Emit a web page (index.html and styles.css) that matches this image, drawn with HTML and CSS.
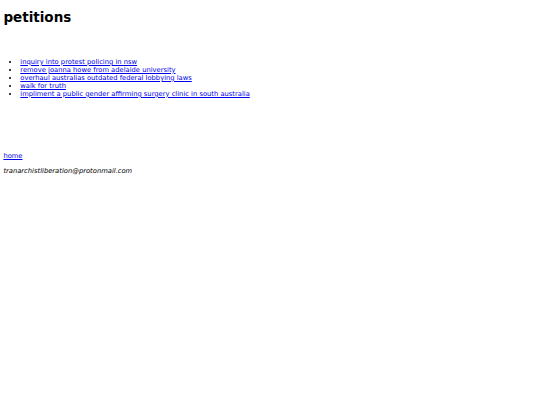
FILE: index.html
```html
<!DOCTYPE html>
<html lang="en">
<head>
<meta charset="utf-8">
<title>petitions</title>
<link rel="stylesheet" href="styles.css">
</head>
<body>
<h1 class="title">petitions</h1>
<ul class="petitions">
<li><a href="#">inquiry into protest policing in nsw</a></li>
<li><a href="#">remove joanna howe from adelaide university</a></li>
<li><a href="#">overhaul australias outdated federal lobbying laws</a></li>
<li><a href="#">walk for truth</a></li>
<li><a href="#">impliment a public gender affirming surgery clinic in south australia</a></li>
</ul>
<p class="home"><a href="#">home</a></p>
<p class="contact"><i>tranarchistliberation@protonmail.com</i></p>
</body>
</html>
```
FILE: styles.css
```css
body {
  margin: 3.375px;
  font-family: "DejaVu Sans", sans-serif;
  font-size: 6.75px;
  color: #000;
  background: #fff;
}
.title {
  font-size: 13.5px;
  margin: 6px 0 9px;
}
.petitions {
  margin: 32.5px 0 6.75px;
  padding-left: 16.9px;
}
a {
  color: #0000ee;
}
.home {
  margin: 54px 0 6.75px;
}
.contact {
  margin: 6.75px 0;
}
```
